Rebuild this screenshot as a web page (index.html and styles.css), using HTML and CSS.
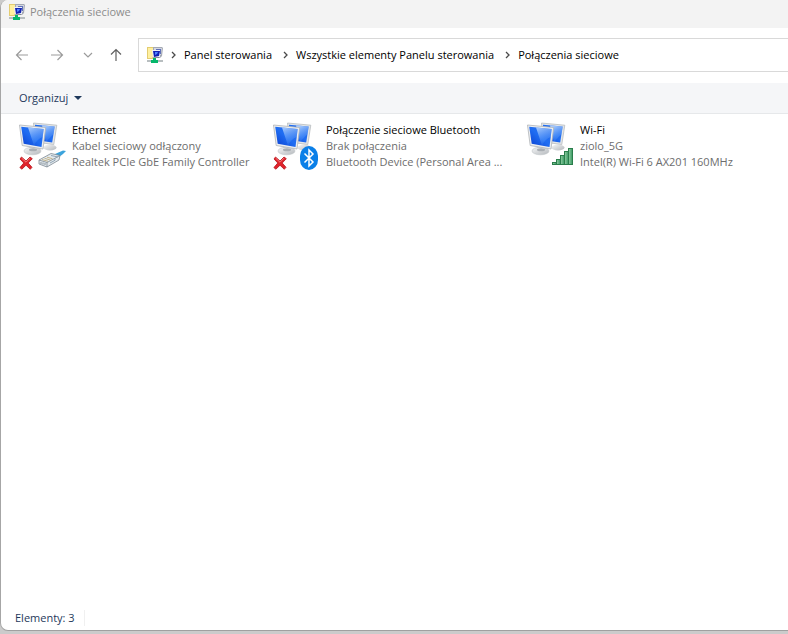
FILE: index.html
```html
<!DOCTYPE html>
<html lang="pl">
<head>
<meta charset="utf-8">
<title>Połączenia sieciowe</title>
<link rel="stylesheet" href="styles.css">
</head>
<body>
<svg class="defs" aria-hidden="true">
  <defs>
    <linearGradient id="screen" x1="0" y1="1" x2="1" y2="0">
      <stop offset="0" stop-color="#0b3fd0"/><stop offset=".5" stop-color="#1f6df2"/><stop offset="1" stop-color="#2a6ce8"/>
    </linearGradient>
    <linearGradient id="gloss" x1="0" y1="0" x2=".4" y2="1">
      <stop offset="0" stop-color="#cfe4ff" stop-opacity=".95"/><stop offset="1" stop-color="#5fa4ff" stop-opacity=".15"/>
    </linearGradient>
    <linearGradient id="metal" x1="0" y1="0" x2="1" y2="1">
      <stop offset="0" stop-color="#f6f7f8"/><stop offset="1" stop-color="#b4b8bc"/>
    </linearGradient>
    <linearGradient id="bar" x1="0" y1="0" x2="1" y2="0">
      <stop offset="0" stop-color="#93cfa4"/><stop offset="1" stop-color="#359760"/>
    </linearGradient>
    <symbol id="monitors" viewBox="0 0 48 48">
      <ellipse cx="32" cy="25.500" rx="6.500" ry="3" fill="url(#metal)"/>
      <path d="M15.500 1 38.800 3.200 35.800 22.500 17 20Z" fill="#e3e6e8" stroke="#b0b4b8" stroke-width=".7"/>
      <path d="M17 2.700 36.700 4.600 34.200 20.600 18 18Z" fill="url(#screen)"/>
      <path d="M24 3.400 36.700 4.600 35.500 12 28 20Z" fill="url(#gloss)"/>
      <path d="M11 24h8l1 5h-9z" fill="#c3c7ca"/>
      <ellipse cx="14.500" cy="29" rx="8.500" ry="3.800" fill="url(#metal)" stroke="#c0c4c7" stroke-width=".6"/>
      <ellipse cx="15" cy="27.800" rx="4" ry="1.500" fill="#a9aeb3"/>
      <path d="M1.500 3 27.700 5.500 25 27 4.200 23.500Z" fill="#eceef0" stroke="#b0b4b7" stroke-width=".8"/>
      <path d="M3.200 4.800 25.700 7 23.500 25 5.700 21.700Z" fill="url(#screen)"/>
      <path d="M10 5.500 25.700 7 24.700 15 Q19 17 16 23.500Z" fill="url(#gloss)" opacity=".85"/>
    </symbol>
    <symbol id="cross" viewBox="0 0 14 14">
      <path d="M2.500 1 7 5 11 1 13.300 2.700 9.200 7 13 11.300 11.300 13.300 7 9.200 2.900 13.200.9 11.600 4.800 7 1 3Z" fill="#e0232b" stroke="#b5141c" stroke-width=".8"/>
      <path d="M2.700 2.200 7 6.200 11 2.100" fill="none" stroke="#f47a7c"/>
    </symbol>
    <symbol id="network" viewBox="0 0 16 16">
      <path d="M0 0h7v12H0z" fill="#e3cc70"/>
      <path d="M1 1h6v10H1z" fill="#fff0a0"/>
      <path d="M6 0h9l1 1-1 8-2 2H6z" fill="#a5a9b3"/>
      <path d="M7 1h8l-1 7H7z" fill="#d3d7e2"/>
      <path d="M9 2h5v5H9z" fill="#5f70b8"/>
      <path d="M5 3h8v7l-7 1z" fill="#eef0f6"/>
      <path d="M6 4h7l-1 5-5 1z" fill="#1424b4"/>
      <path d="M8 5h3l-1 2-2 1z" fill="#4f83ff"/>
      <path d="M5 10.500 12 10v1H6z" fill="#80858e"/>
      <path d="M0 13h16v2H0z" fill="#b8bec0"/>
      <path d="M6 11h3v2h2v3H4v-3h2z" fill="#05b76b"/>
    </symbol>
  </defs>
</svg>
<div class="window">
  <header class="titlebar">
    <svg class="app-icon" aria-hidden="true"><use href="#network"/></svg>
    <h1 class="title">Połączenia sieciowe</h1>
  </header>
  <div class="navbar">
    <div class="nav-buttons">
      <button class="nav-button" type="button" aria-label="Wstecz"><svg viewBox="0 0 14 14"><path d="M13 7H1.500M6.500 2l-5 5 5 5"/></svg></button>
      <button class="nav-button" type="button" aria-label="Dalej"><svg viewBox="0 0 14 14"><path d="M1 7h11.500M7.500 2l5 5-5 5"/></svg></button>
      <button class="nav-button recent" type="button" aria-label="Ostatnie lokalizacje"><svg viewBox="0 0 14 14"><path d="M3 5l4 4 4-4"/></svg></button>
      <button class="nav-button up" type="button" aria-label="W górę"><svg viewBox="0 0 14 14"><path d="M7 13V1.500M2 6.500l5-5 5 5"/></svg></button>
    </div>
    <nav class="address" aria-label="Ścieżka">
      <svg class="app-icon" aria-hidden="true"><use href="#network"/></svg>
      <svg class="sep" viewBox="0 0 5 8" aria-hidden="true"><path d="M1 1l3 3-3 3"/></svg>
      <a class="crumb" href="#">Panel sterowania</a>
      <svg class="sep" viewBox="0 0 5 8" aria-hidden="true"><path d="M1 1l3 3-3 3"/></svg>
      <a class="crumb" href="#">Wszystkie elementy Panelu sterowania</a>
      <svg class="sep" viewBox="0 0 5 8" aria-hidden="true"><path d="M1 1l3 3-3 3"/></svg>
      <a class="crumb" href="#">Połączenia sieciowe</a>
    </nav>
  </div>
  <div class="toolbar">
    <button class="organize" type="button">Organizuj<svg viewBox="0 0 8 4" aria-hidden="true"><path d="M0 0h8L4 4z"/></svg></button>
  </div>
  <main class="content">
    <ul class="connections">
      <li class="connection">
        <svg class="connection-icon" viewBox="0 0 48 48" aria-hidden="true">
          <use href="#monitors" width="48" height="48"/>
          <use href="#cross" x="1" y="34" width="14" height="14"/>
          <path d="M37 32 45 28.500 48 29 45 32 41 35Z" fill="#3ba3dc"/>
          <path d="M21 38 33 31.500 42 33.500 41 38 29 45 21 42Z" fill="#e4eaee" stroke="#7d8993" stroke-width=".8"/>
          <path d="M21 38 29 40.500 42 33.500M29 40.500V45" fill="none" stroke="#7c8993" stroke-width=".8"/>
          <path d="M24 37.500l6 1.800M26.500 36.300l6 1.800M29 35.200l5.500 1.500" stroke="#b7a472" stroke-width=".8"/>
          <path d="M23 40v2M25 40.500v2M27 41v2" stroke="#5f6e7a" stroke-width=".7"/>
          <path d="M33 33.500l7 1.500M32 41l5-2.700v-2" fill="none" stroke="#8fa3b3"/>
        </svg>
        <div class="info">
          <p class="name">Ethernet</p>
          <p class="detail">Kabel sieciowy odłączony</p>
          <p class="detail">Realtek PCIe GbE Family Controller</p>
        </div>
      </li>
      <li class="connection">
        <svg class="connection-icon" viewBox="0 0 48 48" aria-hidden="true">
          <use href="#monitors" width="48" height="48"/>
          <use href="#cross" x="1" y="34" width="14" height="14"/>
          <rect x="28" y="24" width="18" height="24" rx="9" ry="10" fill="#0a7fe8"/>
          <path d="M32.500 31.500 41 40l-4 4V28l4 4-8.500 8.500" fill="none" stroke="#fff" stroke-width="1.500"/>
        </svg>
        <div class="info">
          <p class="name">Połączenie sieciowe Bluetooth</p>
          <p class="detail">Brak połączenia</p>
          <p class="detail">Bluetooth Device (Personal Area ...</p>
        </div>
      </li>
      <li class="connection">
        <svg class="connection-icon" viewBox="0 0 48 48" aria-hidden="true">
          <use href="#monitors" width="48" height="48"/>
          <g fill="url(#bar)" stroke="#2a7d4b" stroke-width="1">
            <rect x="26.500" y="40.500" width="4" height="2"/>
            <rect x="30.500" y="37.500" width="4" height="5"/>
            <rect x="34.500" y="33.500" width="4" height="9"/>
            <rect x="38.500" y="29.500" width="4" height="13"/>
            <rect x="42.500" y="26.500" width="4" height="16"/>
          </g>
        </svg>
        <div class="info">
          <p class="name">Wi-Fi</p>
          <p class="detail">ziolo_5G</p>
          <p class="detail">Intel(R) Wi-Fi 6 AX201 160MHz</p>
        </div>
      </li>
    </ul>
  </main>
  <footer class="statusbar"><span class="count">Elementy: 3</span></footer>
</div>
</body>
</html>
```
FILE: styles.css
```css
* {
  box-sizing: border-box;
}

body {
  margin: 0;
  min-height: 100vh;
  padding-bottom: 3px;
  display: flex;
  background: #cbcbcb;
  color: #000;
  font: 11px/16px "Segoe UI", "Open Sans", "Noto Sans", sans-serif;
}

h1, p, ul {
  margin: 0;
  padding: 0;
}

button {
  border: 0;
  padding: 0;
  background: none;
  font: inherit;
}

.defs {
  position: absolute;
  width: 0;
  height: 0;
}

.window {
  flex: 1;
  min-width: 0;
  display: flex;
  flex-direction: column;
  overflow: hidden;
  background: #fff;
  border-left: 1px solid #a6a6a6;
  border-bottom: 1px solid #a0a0a0;
  border-radius: 8px 0 0 8px;
}

.titlebar {
  display: flex;
  align-items: center;
  gap: 5px;
  height: 28px;
  padding: 0 8px 4px;
  background: #f3f3f3;
}

.app-icon {
  flex: none;
  width: 16px;
  height: 16px;
}

.title {
  font-size: 11px;
  font-weight: 400;
  color: #8c8c8c;
}

.navbar {
  display: flex;
  align-items: center;
  height: 55px;
  padding-bottom: 1px;
}

.nav-buttons {
  display: flex;
  flex: none;
  padding: 0 8px 0 7px;
}

.nav-button {
  display: grid;
  place-items: center;
  width: 28px;
  height: 28px;
  margin-right: 7px;
}

.nav-button svg {
  width: 14px;
  height: 14px;
  fill: none;
  stroke: #9b9b9b;
  stroke-width: 1.2;
}

.nav-button.recent {
  width: 20px;
  margin-right: 0;
}

.nav-button.up svg {
  stroke: #606060;
}

.nav-button.up {
  margin: 0 0 0 4px;
}

.address {
  flex: 1;
  display: flex;
  align-items: center;
  gap: 8px;
  height: 34px;
  padding-left: 8px;
  border: 1px solid #d9d9d9;
  border-right: 0;
  white-space: nowrap;
}

.sep {
  flex: none;
  width: 5px;
  height: 8px;
  fill: none;
  stroke: #4a4a4a;
  stroke-width: 1.3;
}

.crumb {
  padding-right: 3px;
  color: #000;
  text-decoration: none;
}

.toolbar {
  display: flex;
  align-items: center;
  height: 31px;
  padding-left: 18px;
  background: #f5f6f8;
  border-bottom: 1px solid #e6e8ea;
}

.organize {
  display: flex;
  align-items: center;
  gap: 6px;
  color: #1e395b;
}

.organize svg {
  width: 8px;
  height: 4px;
  fill: #1e395b;
}

.content {
  flex: 1;
  padding: 8px 0 0 17px;
}

.connections {
  display: grid;
  grid-template-columns: repeat(auto-fill, 254px);
  row-gap: 8px;
  list-style: none;
}

.connection {
  display: flex;
  gap: 6px;
}

.connection-icon {
  flex: none;
  width: 48px;
  height: 48px;
}

.info {
  white-space: nowrap;
}

.detail {
  color: #6d6d6d;
}

.statusbar {
  display: flex;
  align-items: center;
  height: 24px;
  padding-left: 14px;
  color: #1e395b;
}

.count {
  padding-right: 9px;
  border-right: 1px solid #f0f0f0;
}
```
